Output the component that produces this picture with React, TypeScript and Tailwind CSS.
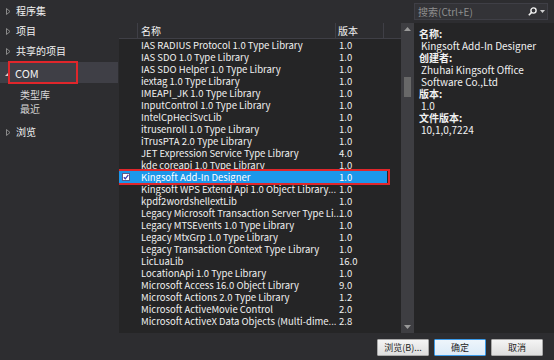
import React from 'react';

type Row = { name: string; version: string; selected?: boolean };

const rows: Row[] = [
  { name: 'IAS RADIUS Protocol 1.0 Type Library', version: '1.0' },
  { name: 'IAS SDO 1.0 Type Library', version: '1.0' },
  { name: 'IAS SDO Helper 1.0 Type Library', version: '1.0' },
  { name: 'iextag 1.0 Type Library', version: '1.0' },
  { name: 'IMEAPI_JK 1.0 Type Library', version: '1.0' },
  { name: 'InputControl 1.0 Type Library', version: '1.0' },
  { name: 'IntelCpHeciSvcLib', version: '1.0' },
  { name: 'itrusenroll 1.0 Type Library', version: '1.0' },
  { name: 'iTrusPTA 2.0 Type Library', version: '1.0' },
  { name: 'JET Expression Service Type Library', version: '4.0' },
  { name: 'kde coreapi 1.0 Type Library', version: '1.0' },
  { name: 'Kingsoft Add-In Designer', version: '1.0', selected: true },
  { name: 'Kingsoft WPS Extend Api 1.0 Object Library...', version: '1.0' },
  { name: 'kpdf2wordshellextLib', version: '1.0' },
  { name: 'Legacy Microsoft Transaction Server Type Li...', version: '1.0' },
  { name: 'Legacy MTSEvents 1.0 Type Library', version: '1.0' },
  { name: 'Legacy MtxGrp 1.0 Type Library', version: '1.0' },
  { name: 'Legacy Transaction Context Type Library', version: '1.0' },
  { name: 'LicLuaLib', version: '16.0' },
  { name: 'LocationApi 1.0 Type Library', version: '1.0' },
  { name: 'Microsoft Access 16.0 Object Library', version: '9.0' },
  { name: 'Microsoft Actions 2.0 Type Library', version: '1.2' },
  { name: 'Microsoft ActiveMovie Control', version: '2.0' },
  { name: 'Microsoft ActiveX Data Objects (Multi-dime...', version: '2.8' },
];

const Arrow = () => (
  <svg width="5" height="7" viewBox="0 0 5 7" className="mr-[5px]">
    <path d="M0.5 0.5 L4 3.5 L0.5 6.5 Z" fill="none" stroke="#8a8a8a" strokeWidth="1" />
  </svg>
);

const NavItem: React.FC<{ label: string }> = ({ label }) => (
  <div className="flex items-center h-[20px] pl-[6px]">
    <Arrow />
    <span>{label}</span>
  </div>
);

const Button: React.FC<{ label: string; primary?: boolean }> = ({ label, primary }) => (
  <div
    className={
      'w-[52px] h-[17px] flex items-center justify-center text-[9px] text-[#1e1e1e] rounded-[1px] border ' +
      (primary
        ? 'border-[#3c9be8] bg-gradient-to-b from-[#eef5fb] to-[#dcebf8]'
        : 'border-[#a9a9a9] bg-gradient-to-b from-[#f4f4f4] to-[#dedede]')
    }
  >
    {label}
  </div>
);

export default function App() {
  return (
    <div
      className="w-[554px] h-[360px] bg-[#2d2d30] text-[#f1f1f1] text-[10px] leading-[12px] flex flex-col overflow-hidden"
      style={{ fontFamily: '"Noto Sans CJK SC", "Noto Sans", sans-serif' }}
    >
      <div className="flex h-[333px]">
        {/* left nav */}
        <div className="w-[118px] pt-[1px] flex flex-col">
          <NavItem label="程序集" />
          <NavItem label="项目" />
          <NavItem label="共享的项目" />
          <div className="relative h-[21px] mt-[1px] bg-[#3f3f46] flex items-center pl-[15px]">
            <svg width="3" height="3" viewBox="0 0 3 3" className="absolute left-[5px] top-[11px]">
              <path d="M3 0 L3 3 L0 3 Z" fill="#d0d0d0" />
            </svg>
            <span className="text-[11px]">COM</span>
            <div className="absolute left-[8px] top-[-1px] w-[70px] h-[23px] border-2 border-[#e0262b]" />
          </div>
          <div className="pl-[20px] pt-[5px] text-[#d8d8d8] leading-[14px]">
            <div>类型库</div>
            <div>最近</div>
          </div>
          <div className="mt-[6px]">
            <NavItem label="浏览" />
          </div>
        </div>

        {/* middle list */}
        <div className="w-[296px] flex flex-col">
          <div className="h-[23px]" />
          <div className="flex-1 flex bg-[#252526] ml-[1px] overflow-hidden">
            <div className="w-[282px] flex flex-col">
              <div className="h-[16px] flex bg-[#2d2d30] border-b border-[#3f3f46] shrink-0">
                <div className="w-[19px] border-r border-[#3f3f46]" />
                <div className="w-[198px] border-r border-[#3f3f46] pl-[3px] flex items-center">名称</div>
                <div className="w-[48px] border-r border-[#3f3f46] pl-[2px] flex items-center">版本</div>
                <div className="flex-1" />
              </div>
              <div className="relative flex flex-col text-[9.5px] leading-[12px]">
                {rows.map((r, i) => (
                  <div
                    key={i}
                    className={
                      'h-[12px] flex items-center mr-[14px] ' + (r.selected ? 'bg-[#1c97ea] text-white' : '')
                    }
                  >
                    <div className="w-[22px] flex items-center pl-[3px]">
                      {r.selected && (
                        <div className="w-[8px] h-[8px] bg-white border border-[#5a5a8a] flex items-center justify-center">
                          <svg width="6" height="6" viewBox="0 0 6 6">
                            <path d="M0.8 3.2 L2.3 4.8 L5.3 0.8" fill="none" stroke="#3a3ab0" strokeWidth="1.3" />
                          </svg>
                        </div>
                      )}
                    </div>
                    <div className="w-[196px] whitespace-nowrap">{r.name}</div>
                    <div className="pl-[2px]">{r.version}</div>
                  </div>
                ))}
                <div className="absolute left-[-3px] top-[130px] w-[274px] h-[16px] border-2 border-[#e0262b]" />
              </div>
            </div>
            <div className="w-[13px] bg-[#3e3e42] flex flex-col items-center justify-between py-[4px]">
              <div className="flex flex-col items-center">
                <svg width="7" height="4" viewBox="0 0 7 4">
                  <path d="M0 4 L3.5 0 L7 4 Z" fill="#999999" />
                </svg>
                <div className="w-[7px] h-[20px] bg-[#686868] mt-[46px]" />
              </div>
              <svg width="7" height="4" viewBox="0 0 7 4">
                <path d="M0 0 L7 0 L3.5 4 Z" fill="#999999" />
              </svg>
            </div>
          </div>
        </div>

        {/* right details */}
        <div className="flex-1 flex flex-col">
          <div className="h-[23px] pt-[3px] pr-[6px]">
            <div className="h-[17px] bg-[#333337] border border-[#3f3f46] flex items-center pl-[3px] pr-[2px] text-[#8e8e8e]">
              <span className="flex-1">搜索(Ctrl+E)</span>
              <svg width="9" height="9" viewBox="0 0 9 9" className="mr-[3px]">
                <circle cx="5.5" cy="3.5" r="2.6" fill="none" stroke="#f1f1f1" strokeWidth="1.4" />
                <path d="M3.6 5.4 L0.8 8.2" stroke="#f1f1f1" strokeWidth="1.6" />
              </svg>
              <svg width="5" height="3" viewBox="0 0 5 3">
                <path d="M0 0 L5 0 L2.5 3 Z" fill="#d0d0d0" />
              </svg>
            </div>
          </div>
          <div className="flex-1 bg-[#252526] pl-[5px] pt-[5px] text-[10px] leading-[12px]">
            <div className="font-bold">名称:</div>
            <div className="pl-[2px]">Kingsoft Add-In Designer</div>
            <div className="font-bold">创建者:</div>
            <div className="pl-[2px]">Zhuhai Kingsoft Office</div>
            <div className="pl-[2px]">Software Co.,Ltd</div>
            <div className="font-bold">版本:</div>
            <div className="pl-[2px]">1.0</div>
            <div className="font-bold">文件版本:</div>
            <div className="pl-[2px]">10,1,0,7224</div>
          </div>
        </div>
      </div>

      {/* bottom buttons */}
      <div className="flex-1 flex items-start justify-end gap-[5px] pt-[6px] pr-[11px]">
        <Button label="浏览(B)..." />
        <Button label="确定" primary />
        <Button label="取消" />
      </div>
    </div>
  );
}
